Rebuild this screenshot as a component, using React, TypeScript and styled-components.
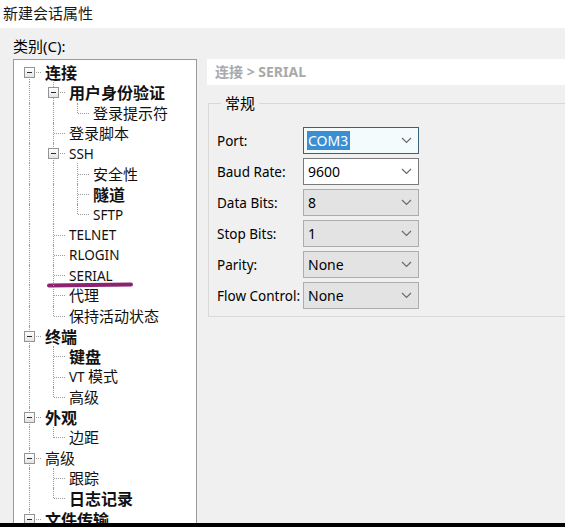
import React from 'react';
import styled, { createGlobalStyle, css } from 'styled-components';

const GlobalStyle = createGlobalStyle`
  html, body {
    margin: 0;
    padding: 0;
    background: #f0f0f0;
    overflow: hidden;
  }
  body {
    font-family: "Segoe UI", "Noto Sans", "Noto Sans CJK SC", sans-serif;
    color: #000;
  }
`;

type Node = {
  label: string;
  level: number;
  bold?: boolean;
  expander?: boolean;
  marked?: boolean;
};

const nodes: Node[] = [
  { label: '连接', level: 0, bold: true, expander: true },
  { label: '用户身份验证', level: 1, bold: true, expander: true },
  { label: '登录提示符', level: 2 },
  { label: '登录脚本', level: 1 },
  { label: 'SSH', level: 1, expander: true },
  { label: '安全性', level: 2 },
  { label: '隧道', level: 2, bold: true },
  { label: 'SFTP', level: 2 },
  { label: 'TELNET', level: 1 },
  { label: 'RLOGIN', level: 1 },
  { label: 'SERIAL', level: 1, marked: true },
  { label: '代理', level: 1 },
  { label: '保持活动状态', level: 1 },
  { label: '终端', level: 0, bold: true, expander: true },
  { label: '键盘', level: 1, bold: true },
  { label: 'VT 模式', level: 1 },
  { label: '高级', level: 1 },
  { label: '外观', level: 0, bold: true, expander: true },
  { label: '边距', level: 1 },
  { label: '高级', level: 0, expander: true },
  { label: '跟踪', level: 1 },
  { label: '日志记录', level: 1, bold: true },
  { label: '文件传输', level: 0, bold: true, expander: true },
];

// does a line at column `col` continue below row i?
function continues(i: number, col: number) {
  for (let j = i + 1; j < nodes.length; j++) {
    if (nodes[j].level < col) return false;
    if (nodes[j].level === col) return true;
  }
  return false;
}

// latin runs are set smaller than the CJK ones, like the Windows UI font
function renderLabel(label: string) {
  return label.split(/([A-Za-z/]+)/).map((part, i) =>
    /[A-Za-z]/.test(part) ? <Latin key={i}>{part}</Latin> : part
  );
}

const fields = [
  { label: 'Port:', value: 'COM3', kind: 'focused' as const },
  { label: 'Baud Rate:', value: '9600', kind: 'edit' as const },
  { label: 'Data Bits:', value: '8', kind: 'list' as const },
  { label: 'Stop Bits:', value: '1', kind: 'list' as const },
  { label: 'Parity:', value: 'None', kind: 'list' as const },
  { label: 'Flow Control:', value: 'None', kind: 'list' as const },
];

export default function App() {
  return (
    <>
      <GlobalStyle />
      <Window>
        <TitleBar>新建会话属性</TitleBar>
        <Body>
          <CategoryLabel>类别(C):</CategoryLabel>
          <Columns>
            <Tree>
              {nodes.map((n, i) => (
                <TreeRow key={i}>
                  {Array.from({ length: n.level }).map((_, c) => (
                    <Guide key={c} $pass={continues(i, c)} />
                  ))}
                  <Connector $top={i > 0} $bottom={continues(i, n.level)}>
                    {n.expander && <Expander />}
                  </Connector>
                  <TreeText $bold={n.bold}>{renderLabel(n.label)}</TreeText>
                  {n.marked && <Mark />}
                </TreeRow>
              ))}
            </Tree>
            <Panel>
              <Crumb>连接 &gt; SERIAL</Crumb>
              <Group>
                <Legend>常规</Legend>
                {fields.map((f) => (
                  <FieldRow key={f.label}>
                    <FieldLabel>{f.label}</FieldLabel>
                    <Combo $kind={f.kind}>
                      {f.kind === 'focused' ? <Selected>{f.value}</Selected> : <span>{f.value}</span>}
                      <Chevron width="11" height="7" viewBox="0 0 11 7">
                        <path d="M1 1 L5.5 5.5 L10 1" fill="none" stroke="#6b6b6b" strokeWidth="1.2" />
                      </Chevron>
                    </Combo>
                  </FieldRow>
                ))}
              </Group>
            </Panel>
          </Columns>
        </Body>
        <BottomEdge />
      </Window>
    </>
  );
}

const Window = styled.div`
  width: 565px;
  height: 527px;
  display: flex;
  flex-direction: column;
  overflow: hidden;
`;

const TitleBar = styled.div`
  height: 28px;
  flex: none;
  background: #ffffff;
  padding-left: 3px;
  font-size: 15px;
  line-height: 26px;
  color: #1a1a1a;
`;

const Body = styled.div`
  flex: 1;
  min-height: 0;
  display: flex;
  flex-direction: column;
  padding-left: 13px;
`;

const CategoryLabel = styled.div`
  font-size: 15px;
  line-height: 20px;
  padding-top: 8px;
  margin-bottom: 3px;
`;

const Columns = styled.div`
  flex: 1;
  min-height: 0;
  display: flex;
  gap: 10px;
`;

const Tree = styled.div`
  box-sizing: border-box;
  width: 184px;
  flex: none;
  background: #ffffff;
  border: 1px solid #9a9a9a;
  border-bottom: none;
  padding: 2px 0 0 3px;
  overflow: hidden;
  font-family: "Noto Sans CJK SC", "Noto Sans", sans-serif;
`;

const TreeRow = styled.div`
  position: relative;
  display: flex;
  align-items: center;
  height: 20.3px;
`;

const dotted = '1px dotted #9c9c9c';

const Guide = styled.div<{ $pass: boolean }>`
  width: 24px;
  height: 100%;
  flex: none;
  position: relative;
  ${(p) =>
    p.$pass &&
    css`
      &::before {
        content: '';
        position: absolute;
        left: 12px;
        top: 0;
        bottom: 0;
        border-left: ${dotted};
      }
    `}
`;

const Connector = styled.div<{ $top: boolean; $bottom: boolean }>`
  width: 24px;
  height: 100%;
  flex: none;
  position: relative;
  &::before {
    content: '';
    position: absolute;
    left: 12px;
    top: ${(p) => (p.$top ? '0' : '50%')};
    bottom: ${(p) => (p.$bottom ? '0' : '50%')};
    border-left: ${dotted};
  }
  &::after {
    content: '';
    position: absolute;
    left: 13px;
    right: 0;
    top: 50%;
    border-top: ${dotted};
  }
`;

const Expander = styled.span`
  position: absolute;
  left: 7px;
  top: calc(50% - 5px);
  width: 9px;
  height: 9px;
  border: 1px solid #949494;
  background: linear-gradient(#ffffff, #e4e4e4);
  z-index: 1;
  &::after {
    content: '';
    position: absolute;
    left: 2px;
    right: 2px;
    top: 4px;
    border-top: 1px solid #2b2b2b;
  }
`;

const TreeText = styled.span<{ $bold?: boolean }>`
  margin-left: 4px;
  white-space: nowrap;
  font-size: ${(p) => (p.$bold ? '16px' : '15px')};
  font-weight: ${(p) => (p.$bold ? 700 : 400)};
  line-height: 18px;
  color: #111;
`;

const Latin = styled.span`
  font-family: "Noto Sans", sans-serif;
  font-size: 13.5px;
`;

const Mark = styled.span`
  position: absolute;
  left: 30px;
  top: 18px;
  width: 86px;
  height: 4px;
  border-radius: 3px;
  background: #8c2370;
  transform: rotate(-0.8deg);
`;

const Panel = styled.div`
  flex: 1;
  min-width: 0;
  display: flex;
  flex-direction: column;
`;

const Crumb = styled.div`
  height: 26px;
  flex: none;
  background: #ffffff;
  padding-left: 8px;
  font-size: 14px;
  font-weight: 700;
  line-height: 26px;
  color: #a9a9a9;
  margin-right: -20px;
`;

const Group = styled.fieldset`
  margin: 8px -20px 0 1px;
  padding: 6px 0 7px 8px;
  border: 1px solid #d9d9d9;
  display: flex;
  flex-direction: column;
  gap: 4px;
`;

const Legend = styled.legend`
  font-size: 15px;
  line-height: 20px;
  padding: 0 4px;
  margin-left: 4px;
  margin-bottom: 8px;
`;

const FieldRow = styled.div`
  display: flex;
  align-items: center;
  height: 27px;
`;

const FieldLabel = styled.span`
  width: 86px;
  flex: none;
  font-size: 13.5px;
  white-space: nowrap;
`;

type ComboKind = 'focused' | 'edit' | 'list';

const Combo = styled.div<{ $kind: ComboKind }>`
  width: 116px;
  height: 27px;
  box-sizing: border-box;
  display: flex;
  align-items: center;
  justify-content: space-between;
  padding: 0 6px 0 3px;
  font-size: 14px;
  border: 1px solid
    ${(p) => (p.$kind === 'focused' ? '#3b6079' : p.$kind === 'edit' ? '#7a7a7a' : '#adadad')};
  background: ${(p) => (p.$kind === 'focused' ? '#f3fbfd' : p.$kind === 'edit' ? '#ffffff' : '#e3e3e3')};
  span {
    padding-left: 1px;
  }
`;

const Selected = styled.span`
  background: #3a8fd3;
  color: #ffffff;
  line-height: 19px;
  padding: 0 2px;
`;

const Chevron = styled.svg`
  flex: none;
`;

const BottomEdge = styled.div`
  height: 4px;
  flex: none;
  background: #000;
`;
